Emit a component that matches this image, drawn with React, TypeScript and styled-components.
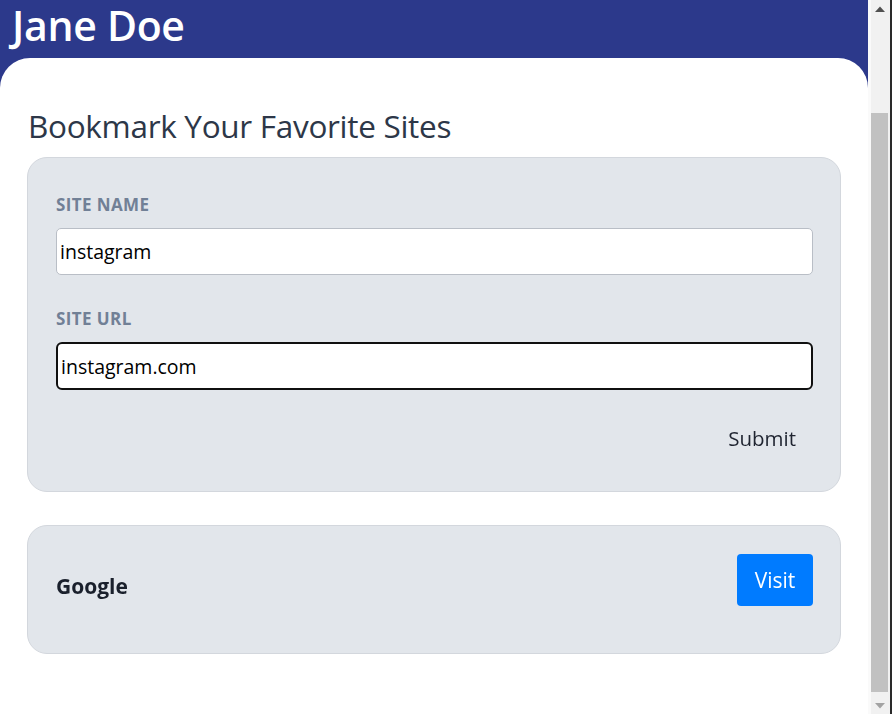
import React from "react";
import styled, { createGlobalStyle } from "styled-components";

const GlobalStyle = createGlobalStyle`
  html, body { margin: 0; padding: 0; height: 100%; overflow: hidden; }
  body { font-family: "Open Sans", "Noto Sans", sans-serif; }
  #root { height: 100%; }
`;

const Shell = styled.div`
  display: flex;
  height: 714px;
  width: 892px;
`;

const Main = styled.div`
  flex: 1;
  display: flex;
  flex-direction: column;
  background: #2c398b;
  min-width: 0;
`;

const Header = styled.header`
  height: 58px;
  padding: 0 12px;
  display: flex;
  align-items: center;
  box-sizing: border-box;
  padding-bottom: 8px;
`;

const Name = styled.h1`
  margin: 0;
  color: #ffffff;
  font-family: "Open Sans", sans-serif;
  font-weight: 600;
  font-size: 41px;
  line-height: 50px;
  letter-spacing: -0.3px;
`;

const Panel = styled.main`
  flex: 1;
  background: #ffffff;
  border-radius: 30px 30px 0 0;
  padding: 48px 27px 0 27px;
  display: flex;
  flex-direction: column;
`;

const Title = styled.h2`
  margin: 0 0 11px 1px;
  color: #2d3748;
  font-family: "Open Sans", sans-serif;
  font-weight: 500;
  font-size: 31.5px;
  line-height: 40px;
  letter-spacing: -0.3px;
`;

const Card = styled.section<{ $pad: string }>`
  background: #e2e6eb;
  border: 1px solid #d3d7dd;
  border-radius: 20px;
  padding: ${(p) => p.$pad};
`;

const Form = styled.form`
  display: flex;
  flex-direction: column;
`;

const Label = styled.label`
  display: block;
  color: #718096;
  font-weight: 700;
  font-size: 17px;
  line-height: 22px;
  margin-bottom: 12px;
  letter-spacing: 0.4px;
`;

const Field = styled.div`
  display: flex;
  flex-direction: column;
  & + & { margin-top: 33px; }
`;

const Input = styled.input<{ $active?: boolean }>`
  box-sizing: border-box;
  width: 100%;
  height: ${(p) => (p.$active ? "48px" : "47px")};
  padding: 0 3px;
  font-family: "Open Sans", sans-serif;
  font-size: 19.5px;
  color: #000;
  background: #fff;
  border: ${(p) => (p.$active ? "2px solid #101010" : "1px solid #b9bec6")};
  border-radius: ${(p) => (p.$active ? "6px" : "5px")};
  outline: none;
  caret-color: #000;
`;

const Actions = styled.div`
  display: flex;
  justify-content: flex-end;
  margin-top: 30px;
`;

const SubmitButton = styled.button`
  background: transparent;
  border: none;
  font-family: "Open Sans", sans-serif;
  font-size: 20.5px;
  line-height: 28px;
  color: #1f2430;
  padding: 4px 17px;
  cursor: pointer;
`;

const List = styled.div`
  margin-top: 33px;
  display: flex;
  flex-direction: column;
  gap: 16px;
`;

const BookmarkRow = styled.div`
  display: flex;
  align-items: flex-start;
  justify-content: space-between;
`;

const SiteName = styled.span`
  color: #1a202c;
  font-weight: 700;
  font-size: 21px;
  line-height: 28px;
  margin-top: 18px;
`;

const VisitButton = styled.a`
  display: inline-flex;
  align-items: center;
  justify-content: center;
  width: 76px;
  height: 52px;
  background: #007bff;
  color: #fff;
  border-radius: 4px;
  font-size: 21px;
  text-decoration: none;
`;

const Scrollbar = styled.div`
  width: 24px;
  display: flex;
  flex-direction: column;
  background: #f1f1f1;
  border-left: 3px solid #fafafa;
  border-right: 2px solid #2a2a2a;
  box-sizing: border-box;
`;

const ArrowBtn = styled.div`
  height: 17px;
  display: flex;
  align-items: center;
  justify-content: center;
  padding-right: 2px;
`;

const TrackGap = styled.div<{ $h: number }>`
  height: ${(p) => p.$h}px;
`;

const Thumb = styled.div`
  flex: 1;
  background: #c1c1c1;
  margin-right: 2px;
`;

const Arrow = ({ dir, color }: { dir: "up" | "down"; color: string }) => (
  <svg width="10" height="6" viewBox="0 0 10 6">
    {dir === "up" ? (
      <polygon points="0,6 5,0.5 10,6" fill={color} />
    ) : (
      <polygon points="0,0 10,0 5,5.5" fill={color} />
    )}
  </svg>
);

export default function App() {
  return (
    <>
      <GlobalStyle />
      <Shell>
        <Main>
          <Header>
            <Name>Jane Doe</Name>
          </Header>
          <Panel>
            <Title>Bookmark Your Favorite Sites</Title>
            <Card $pad="36px 27px 35px 28px">
              <Form onSubmit={(e) => e.preventDefault()}>
                <Field>
                  <Label htmlFor="site-name">SITE NAME</Label>
                  <Input id="site-name" defaultValue="instagram" />
                </Field>
                <Field>
                  <Label htmlFor="site-url">SITE URL</Label>
                  <Input id="site-url" defaultValue="instagram.com" $active autoFocus />
                </Field>
                <Actions>
                  <SubmitButton type="submit">Submit</SubmitButton>
                </Actions>
              </Form>
            </Card>
            <List>
              <Card $pad="28px 27px 47px 28px">
                <BookmarkRow>
                  <SiteName>Google</SiteName>
                  <VisitButton href="#">Visit</VisitButton>
                </BookmarkRow>
              </Card>
            </List>
          </Panel>
        </Main>
        <Scrollbar>
          <ArrowBtn>
            <Arrow dir="up" color="#505050" />
          </ArrowBtn>
          <TrackGap $h={96} />
          <Thumb />
          <TrackGap $h={5} />
          <ArrowBtn>
            <Arrow dir="down" color="#a3a3a3" />
          </ArrowBtn>
        </Scrollbar>
      </Shell>
    </>
  );
}
